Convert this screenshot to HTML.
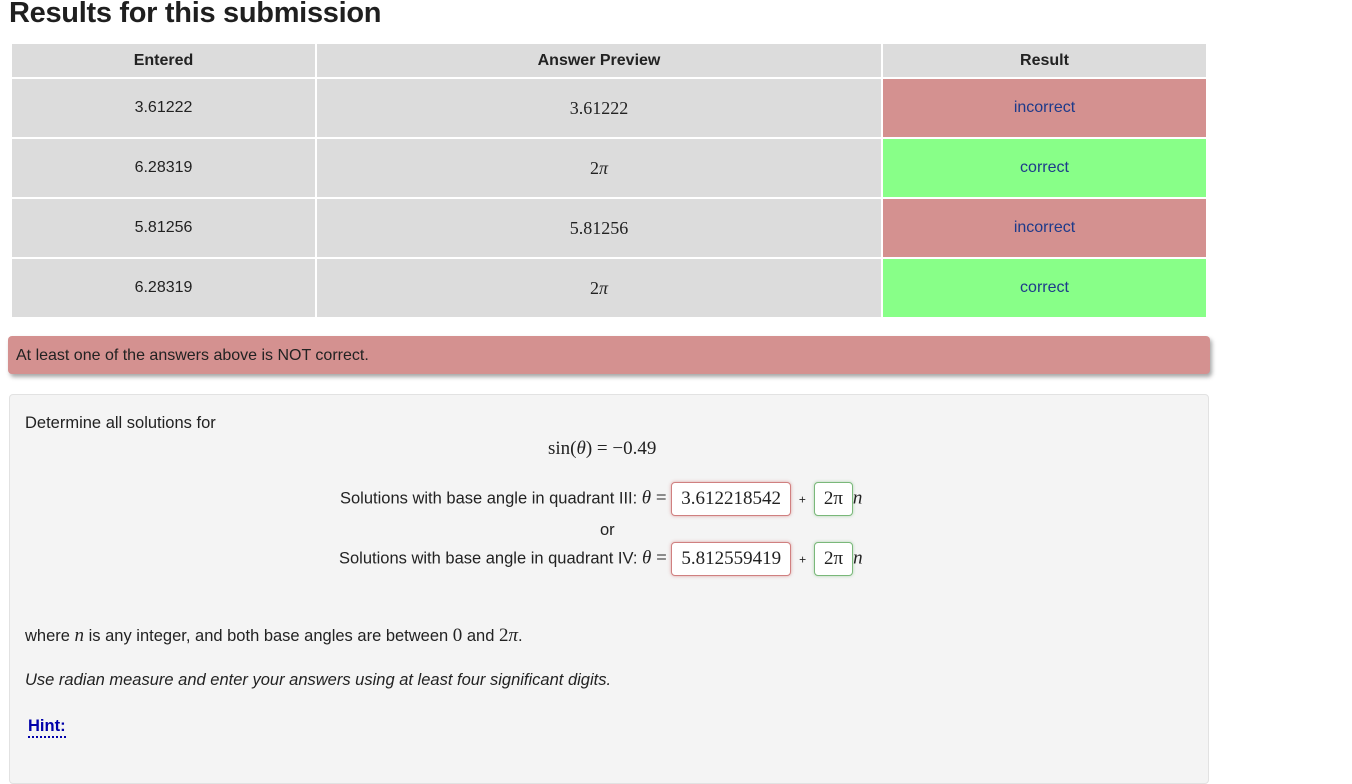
<!DOCTYPE html>
<html><head><style>
body{margin:0;background:#fff;font-family:"Liberation Sans",sans-serif;color:#222;width:1352px;height:771px;overflow:hidden;position:relative}
h1{position:absolute;left:9px;top:-3px;margin:0;font-size:29px;font-weight:bold;color:#1f1f1f;letter-spacing:-0.3px}
table{position:absolute;left:10px;top:42px;border-collapse:collapse;border:1px solid #ccc;width:1198px}
td,th{border:2px solid #fff;background:#dcdcdc;text-align:center;font-size:16px;padding:0}
th{height:33px;font-weight:bold}
td{height:58px}
.m{font-family:"Liberation Serif",serif;font-size:18px}
.bad{background:#d49190;color:#1d3a8a}
.ok{background:#88ff88;color:#1d3a8a}
.alert{position:absolute;left:8px;top:336px;width:1202px;height:38px;background:#d49190;border-radius:4px;box-shadow:2px 3px 4px rgba(0,0,0,.35);font-size:16px;line-height:40px;padding-left:8px;box-sizing:border-box;color:#222}
.panel{position:absolute;left:9px;top:394px;width:1200px;height:390px;background:#f4f4f4;border:1px solid #e2e2e2;border-radius:4px;box-sizing:border-box}
.t{position:absolute;font-size:16.5px;white-space:nowrap}
.s{font-family:"Liberation Serif",serif;font-size:19px}
.box{display:inline-block;background:#fff;border:1px solid #d08080;border-radius:4px;box-shadow:0 0 3px rgba(200,80,80,.5);padding:0 9px;height:32px;line-height:32px;vertical-align:middle;font-family:"Liberation Serif",serif;font-size:19px}
.g{border-color:#7ab87a;box-shadow:0 0 3px rgba(80,160,80,.4)}
</style></head><body>
<h1>Results for this submission</h1>
<table>
<tr><th style="width:303px">Entered</th><th style="width:564px">Answer Preview</th><th>Result</th></tr>
<tr><td>3.61222</td><td class="m">3.61222</td><td class="bad">incorrect</td></tr>
<tr><td>6.28319</td><td class="m">2<i>π</i></td><td class="ok">correct</td></tr>
<tr><td>5.81256</td><td class="m">5.81256</td><td class="bad">incorrect</td></tr>
<tr><td>6.28319</td><td class="m">2<i>π</i></td><td class="ok">correct</td></tr>
</table>
<div class="alert">At least one of the answers above is NOT correct.</div>
<div class="panel"></div>
<div class="t" style="left:25px;top:414px">Determine all solutions for</div>
<div class="t s" style="left:548px;top:438px">sin(<i>θ</i>) = −0.49</div>
<div class="t" style="left:340px;top:482px">Solutions with base angle in quadrant III: <span class="s"><i>θ</i> =</span> <span class="box">3.612218542</span> <span style="font-size:12px">&nbsp;+&nbsp;</span> <span class="box g">2π</span><span class="s"><i>n</i></span></div>
<div class="t" style="left:600px;top:521px">or</div>
<div class="t" style="left:339px;top:542px">Solutions with base angle in quadrant IV: <span class="s"><i>θ</i> =</span> <span class="box">5.812559419</span> <span style="font-size:12px">&nbsp;+&nbsp;</span> <span class="box g">2π</span><span class="s"><i>n</i></span></div>
<div class="t" style="left:25px;top:625px">where <span class="s"><i>n</i></span> is any integer, and both base angles are between <span class="s">0</span> and <span class="s">2<i>π</i></span>.</div>
<div class="t" style="left:25px;top:671px;font-style:italic">Use radian measure and enter your answers using at least four significant digits.</div>
<div class="t" style="left:28px;top:717px;font-weight:bold;color:#0000aa;border-bottom:2px dotted #0000aa">Hint:</div>
</body></html>
